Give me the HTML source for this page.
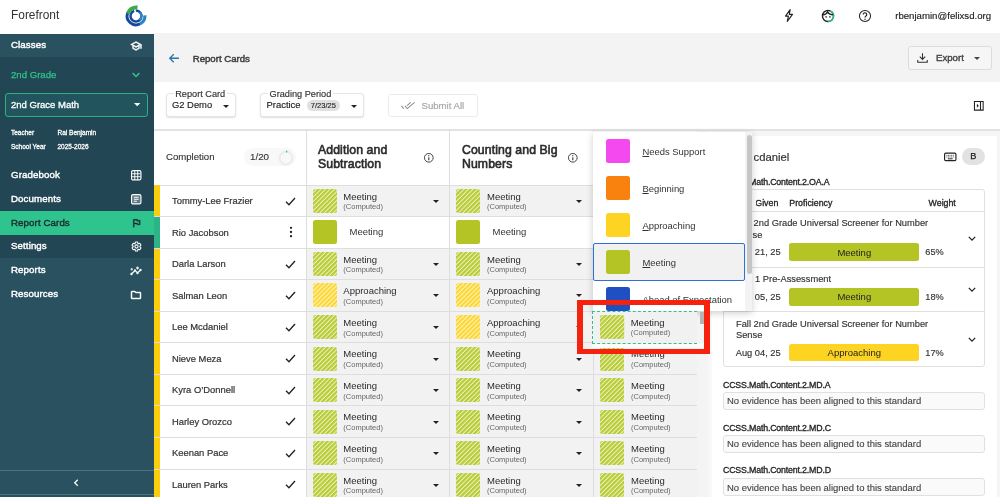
<!DOCTYPE html>
<html lang="en"><head><meta charset="utf-8"><title>Forefront - Report Cards</title>
<style>
html,body{margin:0;padding:0;}
body{width:1000px;height:497px;position:relative;overflow:hidden;background:#fff;font-family:"Liberation Sans", Arial, sans-serif;-webkit-font-smoothing:antialiased;}
#r{position:absolute;left:0;top:0;width:1000px;height:497px;will-change:transform;}
#r>div,#r>svg{position:absolute;}
svg{display:block;overflow:visible;}
</style></head><body><div id="r">
<svg width="0" height="0" style="left:0;top:0"><defs><pattern id="hg" width="3.180" height="40" patternUnits="userSpaceOnUse" patternTransform="rotate(45)"><rect width="3.180" height="40" fill="#edf2c8"/><rect width="2.150" height="40" fill="#b7cc33"/></pattern><pattern id="hy" width="3.180" height="40" patternUnits="userSpaceOnUse" patternTransform="rotate(45)"><rect width="3.180" height="40" fill="#fff4c4"/><rect width="2.150" height="40" fill="#fcd733"/></pattern></defs></svg>
<div style="left:0px;top:0px;width:1000px;height:34px;background:#fff;"></div>
<div style="top:8.46px;font-size:11.9px;line-height:15.47px;color:#333;font-weight:400;white-space:nowrap;left:11px;">Forefront</div>
<svg style="left:124.8px;top:4.8px;" width="22" height="22" viewBox="-11 -11 22 22"><g fill="none"><path d="M-0.19 -5.50A5.5 5.5 0 1 1 -1.88 -5.17" stroke="#17479e" stroke-width="2.4"/><path d="M4.09 -3.68A5.5 5.5 0 0 1 3.68 4.09" stroke="#2a86c2" stroke-width="2.4"/><path d="M4.15 7.81A8.85 8.85 0 0 1 -8.32 -3.03" stroke="#17479e" stroke-width="2.9"/><path d="M-8.18 -2.66A8.6 8.6 0 0 1 1.49 -8.47" stroke="#39ad4a" stroke-width="4.0"/><path d="M8.88 -0.62A8.9 8.9 0 0 1 4.18 7.86" stroke="#2a86c2" stroke-width="3.2"/></g></svg>
<svg style="left:782px;top:8.3px;" width="14" height="15" viewBox="0 0 24 24"><path d="M14 2L6 13h5l-2 9 9-12h-5.5z" fill="none" stroke="#222" stroke-width="1.9" stroke-linejoin="round"/></svg>
<svg style="left:821px;top:9px;" width="14" height="14" viewBox="0 0 24 24"><circle cx="12" cy="12" r="9.5" fill="none" stroke="#222" stroke-width="2.400"/>
<path d="M15.500 3.200A9.500 9.500 0 0 1 21.500 12 9.500 9.500 0 0 1 12 21.500" fill="none" stroke="#2fc48d" stroke-width="2.400"/>
<path d="M3 10c4 0 7-2 8-5 2 3 5 5 10 5" fill="none" stroke="#222" stroke-width="2.200"/>
<circle cx="8.7" cy="13.5" r="1.3" fill="#222"/><circle cx="15.3" cy="13.5" r="1.3" fill="#222"/></svg>
<svg style="left:858px;top:9px;" width="14" height="14" viewBox="0 0 24 24"><circle cx="12" cy="12" r="9.5" fill="none" stroke="#222" stroke-width="1.8"/>
<path d="M9 9.5a3 3 0 1 1 4.6 2.5c-1 .7-1.6 1.2-1.6 2.6" fill="none" stroke="#222" stroke-width="1.9"/><circle cx="12" cy="17.6" r="1.2" fill="#222"/></svg>
<div style="top:9.93px;font-size:9.65px;line-height:12.55px;color:#222;font-weight:400;white-space:nowrap;left:895.2px;-webkit-text-stroke:.15px #222;">rbenjamin@felixsd.org</div>
<div style="left:0px;top:33.5px;width:154px;height:464px;background:#29515f;"></div>
<div style="left:0px;top:57px;width:154px;height:201px;background:#224653;"></div>
<div style="top:39.2px;font-size:9.7px;line-height:12.61px;color:#fff;font-weight:400;white-space:nowrap;left:11px;-webkit-text-stroke:.4px #fff;letter-spacing:.1px;">Classes</div>
<svg style="left:130px;top:39.5px;" width="12" height="12" viewBox="0 0 24 24"><path d="M12 3L1 9l4 2.18v6L12 21l7-3.82v-6l2-1.09V17h2V9L12 3zm6.82 6L12 12.72 5.18 9 12 5.28 18.82 9zM17 15.99l-5 2.73-5-2.73v-3.72L12 15l5-2.73v3.72z" fill="#fff" stroke="#fff" stroke-width=".9"/></svg>
<div style="top:69.06px;font-size:9.6px;line-height:12.48px;color:#2fc48d;font-weight:400;white-space:nowrap;left:11px;-webkit-text-stroke:.25px #2fc48d;">2nd Grade</div>
<svg style="left:131px;top:72px;" width="10" height="6" viewBox="0 0 12 8"><path d="M1.5 1.5L6 6l4.5-4.5" fill="none" stroke="#2fc48d" stroke-width="1.9"/></svg>
<div style="left:4.9px;top:93px;width:143.3px;height:23.6px;box-sizing:border-box;border:1px solid #2bb085;border-radius:3px;background:#22545e;"></div>
<div style="top:99.22px;font-size:9.5px;line-height:12.35px;color:#fff;font-weight:400;white-space:nowrap;left:11px;-webkit-text-stroke:.3px #fff;">2nd Grace Math</div>
<svg style="left:134.1px;top:103.4px;" width="6.4" height="3.2" viewBox="0 0 10 5"><path d="M0 0H10L5 5Z" fill="#fff"/></svg>
<div style="top:128.58px;font-size:6.5px;line-height:8.45px;color:#fff;font-weight:400;white-space:nowrap;left:11px;-webkit-text-stroke:.28px #fff;">Teacher</div>
<div style="top:128.98px;font-size:6.5px;line-height:8.45px;color:#fff;font-weight:400;white-space:nowrap;left:57.5px;-webkit-text-stroke:.28px #fff;">Rai Benjamin</div>
<div style="top:142.78px;font-size:6.5px;line-height:8.45px;color:#fff;font-weight:400;white-space:nowrap;left:11px;-webkit-text-stroke:.28px #fff;">School Year</div>
<div style="top:142.78px;font-size:6.5px;line-height:8.45px;color:#fff;font-weight:400;white-space:nowrap;left:57.5px;-webkit-text-stroke:.28px #fff;">2025-2026</div>
<div style="top:168.69px;font-size:9.7px;line-height:12.61px;color:#fff;font-weight:400;white-space:nowrap;left:11px;-webkit-text-stroke:.4px #fff;letter-spacing:.1px;">Gradebook</div>
<svg style="left:130.8px;top:169.8px;" width="10.5" height="10.5" viewBox="0 0 24 24"><rect x="1.300" y="1.300" width="21.400" height="21.400" rx="3.500" fill="none" stroke="#fff" stroke-width="2.600"/><path d="M8.600 2v20M15.400 2v20M2 8.600h20M2 15.400h20" stroke="#fff" stroke-width="2.200"/></svg>
<div style="top:192.5px;font-size:9.7px;line-height:12.61px;color:#fff;font-weight:400;white-space:nowrap;left:11px;-webkit-text-stroke:.4px #fff;letter-spacing:.1px;">Documents</div>
<svg style="left:130.8px;top:193.7px;" width="10.5" height="10.5" viewBox="0 0 24 24"><rect x="1.300" y="1.300" width="21.400" height="21.400" rx="3.500" fill="#5d7a84" stroke="#fff" stroke-width="2.600"/><path d="M6.500 7.500h11M6.500 12h11M6.500 16.500h7" stroke="#fff" stroke-width="2.400"/></svg>
<div style="left:0px;top:211px;width:154px;height:23.5px;background:#2fc48d;"></div>
<div style="top:216.5px;font-size:9.7px;line-height:12.61px;color:#1c2b30;font-weight:400;white-space:nowrap;left:11px;-webkit-text-stroke:.4px #1c2b30;letter-spacing:.1px;">Report Cards</div>
<svg style="left:131px;top:217px;" width="11" height="12" viewBox="0 0 24 24"><path d="M12.360 6l.4 2H18v6h-3.360l-.4-2H7V6h5.360M14 4H5v17h2v-7h5.600l.4 2h7V6h-5.600L14 4z" fill="#1c2b30" stroke="#1c2b30" stroke-width=".9"/></svg>
<div style="top:240.0px;font-size:9.7px;line-height:12.61px;color:#fff;font-weight:400;white-space:nowrap;left:11px;-webkit-text-stroke:.4px #fff;letter-spacing:.1px;">Settings</div>
<svg style="left:130.5px;top:241px;" width="11" height="11" viewBox="0 0 24 24"><path d="M19.430 12.980c.04-.32.07-.64.07-.98s-.03-.66-.07-.98l2.110-1.650c.19-.15.240-.42.120-.64l-2-3.460c-.12-.22-.39-.3-.61-.22l-2.490 1c-.52-.4-1.080-.73-1.690-.98l-.38-2.650C14.460 2.180 14.250 2 14 2h-4c-.25 0-.46.180-.49.420l-.38 2.650c-.61.250-1.170.59-1.690.98l-2.490-1c-.23-.09-.49 0-.61.220l-2 3.460c-.13.220-.07.490.12.640l2.110 1.650c-.4.320-.7.650-.7.980s.3.660.7.980l-2.110 1.650c-.19.150-.24.420-.12.640l2 3.460c.12.220.39.300.61.220l2.490-1c.52.400 1.080.73 1.690.98l.38 2.650c.3.240.24.420.49.420h4c.25 0 .46-.18.490-.42l.38-2.650c.61-.25 1.170-.59 1.690-.98l2.490 1c.23.090.49 0 .61-.22l2-3.460c.12-.22.070-.49-.12-.64l-2.110-1.650zM12 15.500c-1.930 0-3.500-1.570-3.500-3.500s1.570-3.500 3.500-3.500 3.500 1.570 3.500 3.500-1.570 3.500-3.500 3.500z" fill="none" stroke="#fff" stroke-width="2.300"/></svg>
<div style="top:263.89px;font-size:9.7px;line-height:12.61px;color:#fff;font-weight:400;white-space:nowrap;left:11px;-webkit-text-stroke:.4px #fff;letter-spacing:.1px;">Reports</div>
<svg style="left:130px;top:264.5px;" width="12" height="12" viewBox="0 0 24 24"><path d="M21 8c-1.450 0-2.260 1.440-1.930 2.510l-3.550 3.560c-.3-.09-.74-.09-1.040 0l-2.550-2.550C12.270 10.450 11.460 9 10 9c-1.450 0-2.270 1.440-1.930 2.520l-4.560 4.550C2.440 15.740 1 16.550 1 18c0 1.100.9 2 2 2 1.450 0 2.260-1.440 1.930-2.510l4.550-4.560c.3.090.74.090 1.040 0l2.550 2.550C12.730 16.550 13.540 18 15 18c1.450 0 2.270-1.440 1.930-2.520l3.560-3.550c1.070.33 2.510-.48 2.510-1.930 0-1.100-.9-2-2-2zM15 9l.94-2.070L18 6l-2.060-.93L15 3l-.92 2.070L12 6l2.080.93zM3.500 11L4 9l2-.5L4 8l-.5-2L3 8l-2 .5L3 9z" fill="#fff" stroke="#fff" stroke-width=".9"/></svg>
<div style="top:287.69px;font-size:9.7px;line-height:12.61px;color:#fff;font-weight:400;white-space:nowrap;left:11px;-webkit-text-stroke:.4px #fff;letter-spacing:.1px;">Resources</div>
<svg style="left:130px;top:288.5px;" width="12" height="12" viewBox="0 0 24 24"><path d="M9.170 6l2 2H20v10H4V6h5.170M10 4H4c-1.100 0-1.990.9-1.990 2L2 18c0 1.100.9 2 2 2h16c1.100 0 2-.9 2-2V8c0-1.100-.9-2-2-2h-8l-2-2z" fill="#fff" stroke="#fff" stroke-width=".9"/></svg>
<div style="left:0px;top:469.5px;width:154px;height:0.8px;background:#4f7480;"></div>
<div style="left:0px;top:494.4px;width:154px;height:0.8px;background:#4f7480;"></div>
<svg style="left:73.3px;top:477.8px;" width="6" height="9.5" viewBox="0 0 8 10"><path d="M6.300 1L2.300 5l4 4" fill="none" stroke="#fff" stroke-width="1.700"/></svg>
<div style="left:154px;top:33px;width:846px;height:49px;background:#f3f3f3;"></div>
<svg style="left:167.6px;top:53px;" width="11.5" height="10.5" viewBox="0 0 20 16"><path d="M10 1L3 8l7 7M3.500 8H19" fill="none" stroke="#2576a6" stroke-width="2.300"/></svg>
<div style="top:52.52px;font-size:9.65px;line-height:12.55px;color:#3c3c3c;font-weight:400;white-space:nowrap;left:192.7px;-webkit-text-stroke:.45px #3c3c3c;">Report Cards</div>
<div style="left:908px;top:46px;width:83.5px;height:23.6px;box-sizing:border-box;border:1px solid #dcdcdc;border-radius:3px;background:#f6f6f6;"></div>
<svg style="left:916.3px;top:51.3px;" width="13" height="13.5" viewBox="0 0 24 24"><path d="M12 3.500v11M7 10l5 5 5-5M3.200 16v4.200h17.600V16" fill="none" stroke="#333" stroke-width="2"/></svg>
<div style="top:52.02px;font-size:9.65px;line-height:12.55px;color:#444;font-weight:400;white-space:nowrap;left:936px;-webkit-text-stroke:.4px #444;">Export</div>
<svg style="left:974.0px;top:57.0px;" width="6" height="3" viewBox="0 0 10 5"><path d="M0 0H10L5 5Z" fill="#444"/></svg>
<div style="left:154px;top:82px;width:846px;height:48px;background:#fff;"></div>
<div style="left:166px;top:93.3px;width:70px;height:24px;box-sizing:border-box;border:1px solid #e4e4e4;border-radius:3px;background:#fff;box-shadow:0 1px 1.500px rgba(0,0,0,.12);"></div>
<div style="top:88.62px;font-size:9.2px;line-height:11.96px;color:#333;font-weight:400;white-space:nowrap;left:175.2px;-webkit-text-stroke:.15px #333;background:#fff;padding:0 1.500px;margin-left:-1.500px;">Report Card</div>
<div style="top:99.49px;font-size:9.4px;line-height:12.22px;color:#222;font-weight:400;white-space:nowrap;left:172px;-webkit-text-stroke:.15px #222;">G2 Demo</div>
<svg style="left:223.1px;top:104.5px;" width="6" height="3" viewBox="0 0 10 5"><path d="M0 0H10L5 5Z" fill="#222"/></svg>
<div style="left:260px;top:93.3px;width:104px;height:24px;box-sizing:border-box;border:1px solid #e4e4e4;border-radius:3px;background:#fff;box-shadow:0 1px 1.500px rgba(0,0,0,.12);"></div>
<div style="top:88.62px;font-size:9.2px;line-height:11.96px;color:#333;font-weight:400;white-space:nowrap;left:269.5px;-webkit-text-stroke:.15px #333;background:#fff;padding:0 1.500px;margin-left:-1.500px;">Grading Period</div>
<div style="top:99.45px;font-size:9.45px;line-height:12.29px;color:#222;font-weight:400;white-space:nowrap;left:266.5px;-webkit-text-stroke:.15px #222;">Practice</div>
<div style="left:306.5px;top:99.5px;width:33px;height:11.5px;background:#e0e0e0;border-radius:6px;"></div>
<div style="top:101.12px;font-size:7.5px;line-height:9.75px;color:#222;font-weight:400;white-space:nowrap;left:310.8px;-webkit-text-stroke:.12px #222;">7/23/25</div>
<svg style="left:350.6px;top:104.5px;" width="6" height="3" viewBox="0 0 10 5"><path d="M0 0H10L5 5Z" fill="#222"/></svg>
<div style="left:388.1px;top:93.8px;width:89.5px;height:23.4px;box-sizing:border-box;border:1px solid #ebebeb;border-radius:3px;background:#fff;"></div>
<svg style="left:400.8px;top:102.3px;" width="14" height="7" viewBox="0 0 18 9"><path d="M0.500 5l3 3.500M5 5l3 3.500 9.500-8M12.500 0.500L7.800 4.800" fill="none" stroke="#8c8c8c" stroke-width="1.300"/></svg>
<div style="top:100.16px;font-size:9.6px;line-height:12.48px;color:#a8a8a8;font-weight:400;white-space:nowrap;left:421.5px;-webkit-text-stroke:.2px #a8a8a8;">Submit All</div>
<svg style="left:973.4px;top:99.9px;" width="11.6" height="11.6" viewBox="0 0 24 24"><path d="M3 3h18v18H3zM15.500 3v18" fill="none" stroke="#222" stroke-width="2.200"/><path d="M8 8l4 4-4 4z" fill="#222"/></svg>
<div style="left:154px;top:130px;width:846px;height:367px;background:#fff;"></div>
<div style="left:154px;top:129.2px;width:846px;height:1.4px;background:#e2e2e2;"></div>
<div style="top:150.96px;font-size:9.6px;line-height:12.48px;color:#333;font-weight:400;white-space:nowrap;left:166px;-webkit-text-stroke:.12px #333;">Completion</div>
<div style="left:243.5px;top:148.3px;width:52.8px;height:18px;background:#f8f8f8;border-radius:9px;"></div>
<div style="top:150.83px;font-size:9.8px;line-height:12.74px;color:#333;font-weight:400;white-space:nowrap;left:250px;-webkit-text-stroke:.12px #333;">1/20</div>
<svg style="left:277.5px;top:149.5px;" width="16" height="16" viewBox="0 0 24 24"><circle cx="12" cy="12" r="9.600" fill="none" stroke="#ececec" stroke-width="3"/><path d="M12 2.400A9.600 9.600 0 0 1 13.800 2.570" fill="none" stroke="#2fc48d" stroke-width="2.600"/></svg>
<div style="top:143.03px;font-size:12.25px;line-height:15.93px;color:#2b2b2b;font-weight:400;white-space:nowrap;left:318px;-webkit-text-stroke:.6px #2b2b2b;letter-spacing:.1px;">Addition and</div>
<div style="top:156.84px;font-size:12.25px;line-height:15.93px;color:#2b2b2b;font-weight:400;white-space:nowrap;left:318px;-webkit-text-stroke:.6px #2b2b2b;letter-spacing:.1px;">Subtraction</div>
<svg style="left:422.7px;top:151.9px;" width="11.6" height="11.6" viewBox="0 0 24 24"><circle cx="12" cy="12" r="9" fill="none" stroke="#333" stroke-width="1.900"/><path d="M12 11v6" stroke="#333" stroke-width="2.200"/><circle cx="12" cy="7.600" r="1.300" fill="#333"/></svg>
<div style="top:143.03px;font-size:12.25px;line-height:15.93px;color:#2b2b2b;font-weight:400;white-space:nowrap;left:462px;-webkit-text-stroke:.6px #2b2b2b;letter-spacing:.1px;">Counting and Big</div>
<div style="top:156.84px;font-size:12.25px;line-height:15.93px;color:#2b2b2b;font-weight:400;white-space:nowrap;left:462px;-webkit-text-stroke:.6px #2b2b2b;letter-spacing:.1px;">Numbers</div>
<svg style="left:567.2px;top:151.9px;" width="11.6" height="11.6" viewBox="0 0 24 24"><circle cx="12" cy="12" r="9" fill="none" stroke="#333" stroke-width="1.900"/><path d="M12 11v6" stroke="#333" stroke-width="2.200"/><circle cx="12" cy="7.600" r="1.300" fill="#333"/></svg>
<div style="left:154px;top:184.6px;width:543px;height:1px;background:#dedede;"></div>
<div style="left:154px;top:185.0px;width:6px;height:31.55px;background:#fccd0c;"></div>
<div style="top:195.09px;font-size:9.4px;line-height:12.22px;color:#333;font-weight:400;white-space:nowrap;left:172px;-webkit-text-stroke:.2px #333;">Tommy-Lee Frazier</div>
<svg style="left:285px;top:196.5px;" width="11" height="9" viewBox="0 0 12 10"><path d="M1 5.200L4.300 8.500 11 1.200" fill="none" stroke="#222" stroke-width="1.500"/></svg>
<div style="left:306.5px;top:185.5px;width:142.5px;height:31.05px;background:#f2f2f2;"></div>
<svg style="left:313px;top:188.8px" width="24" height="24"><rect width="24" height="24" rx="2.500" fill="url(#hg)"/></svg>
<div style="top:190.62px;font-size:9.5px;line-height:12.35px;color:#2a2a2a;font-weight:400;white-space:nowrap;left:343.3px;">Meeting</div>
<div style="top:202.33px;font-size:7.5px;line-height:9.75px;color:#666;font-weight:400;white-space:nowrap;left:343.3px;">(Computed)</div>
<svg style="left:433.0px;top:199.8px;" width="6" height="3" viewBox="0 0 10 5"><path d="M0 0H10L5 5Z" fill="#222"/></svg>
<div style="left:449.5px;top:185.5px;width:143.5px;height:31.05px;background:#f2f2f2;"></div>
<svg style="left:456px;top:188.8px" width="24" height="24"><rect width="24" height="24" rx="2.500" fill="url(#hg)"/></svg>
<div style="top:190.62px;font-size:9.5px;line-height:12.35px;color:#2a2a2a;font-weight:400;white-space:nowrap;left:487px;">Meeting</div>
<div style="top:202.33px;font-size:7.5px;line-height:9.75px;color:#666;font-weight:400;white-space:nowrap;left:487px;">(Computed)</div>
<svg style="left:576.4px;top:199.8px;" width="6" height="3" viewBox="0 0 10 5"><path d="M0 0H10L5 5Z" fill="#222"/></svg>
<div style="left:593.5px;top:185.5px;width:103.0px;height:31.05px;background:#f2f2f2;"></div>
<svg style="left:600px;top:188.8px" width="24" height="24"><rect width="24" height="24" rx="2.500" fill="url(#hg)"/></svg>
<div style="top:190.62px;font-size:9.5px;line-height:12.35px;color:#2a2a2a;font-weight:400;white-space:nowrap;left:631px;">Meeting</div>
<div style="top:202.33px;font-size:7.5px;line-height:9.75px;color:#666;font-weight:400;white-space:nowrap;left:631px;">(Computed)</div>
<div style="left:154px;top:216.55px;width:6px;height:31.55px;background:#2cb486;"></div>
<div style="top:226.64px;font-size:9.4px;line-height:12.22px;color:#333;font-weight:400;white-space:nowrap;left:172px;-webkit-text-stroke:.2px #333;">Rio Jacobson</div>
<svg style="left:287.5px;top:226.35000000000002px;" width="6" height="12" viewBox="0 0 6 13"><circle cx="3" cy="2" r="1.250" fill="#222"/><circle cx="3" cy="6.500" r="1.250" fill="#222"/><circle cx="3" cy="11" r="1.250" fill="#222"/></svg>
<div style="left:313px;top:220.35px;width:24px;height:24px;background:#b4c424;border-radius:2.500px;"></div>
<div style="top:226.38px;font-size:9.5px;line-height:12.35px;color:#333;font-weight:400;white-space:nowrap;left:349.5px;">Meeting</div>
<div style="left:456px;top:220.35px;width:24px;height:24px;background:#b4c424;border-radius:2.500px;"></div>
<div style="top:226.38px;font-size:9.5px;line-height:12.35px;color:#333;font-weight:400;white-space:nowrap;left:492.5px;">Meeting</div>
<div style="left:600px;top:220.35px;width:24px;height:24px;background:#b4c424;border-radius:2.500px;"></div>
<div style="top:226.38px;font-size:9.5px;line-height:12.35px;color:#333;font-weight:400;white-space:nowrap;left:636.5px;">Meeting</div>
<div style="left:154px;top:248.1px;width:6px;height:31.55px;background:#fccd0c;"></div>
<div style="top:258.19px;font-size:9.4px;line-height:12.22px;color:#333;font-weight:400;white-space:nowrap;left:172px;-webkit-text-stroke:.2px #333;">Darla Larson</div>
<svg style="left:285px;top:259.6px;" width="11" height="9" viewBox="0 0 12 10"><path d="M1 5.200L4.300 8.500 11 1.200" fill="none" stroke="#222" stroke-width="1.500"/></svg>
<div style="left:306.5px;top:248.6px;width:142.5px;height:31.05px;background:#f2f2f2;"></div>
<svg style="left:313px;top:251.9px" width="24" height="24"><rect width="24" height="24" rx="2.500" fill="url(#hg)"/></svg>
<div style="top:253.73px;font-size:9.5px;line-height:12.35px;color:#2a2a2a;font-weight:400;white-space:nowrap;left:343.3px;">Meeting</div>
<div style="top:265.43px;font-size:7.5px;line-height:9.75px;color:#666;font-weight:400;white-space:nowrap;left:343.3px;">(Computed)</div>
<svg style="left:433.0px;top:262.9px;" width="6" height="3" viewBox="0 0 10 5"><path d="M0 0H10L5 5Z" fill="#222"/></svg>
<div style="left:449.5px;top:248.6px;width:143.5px;height:31.05px;background:#f2f2f2;"></div>
<svg style="left:456px;top:251.9px" width="24" height="24"><rect width="24" height="24" rx="2.500" fill="url(#hg)"/></svg>
<div style="top:253.73px;font-size:9.5px;line-height:12.35px;color:#2a2a2a;font-weight:400;white-space:nowrap;left:487px;">Meeting</div>
<div style="top:265.43px;font-size:7.5px;line-height:9.75px;color:#666;font-weight:400;white-space:nowrap;left:487px;">(Computed)</div>
<svg style="left:576.4px;top:262.9px;" width="6" height="3" viewBox="0 0 10 5"><path d="M0 0H10L5 5Z" fill="#222"/></svg>
<div style="left:593.5px;top:248.6px;width:103.0px;height:31.05px;background:#f2f2f2;"></div>
<svg style="left:600px;top:251.9px" width="24" height="24"><rect width="24" height="24" rx="2.500" fill="url(#hg)"/></svg>
<div style="top:253.73px;font-size:9.5px;line-height:12.35px;color:#2a2a2a;font-weight:400;white-space:nowrap;left:631px;">Meeting</div>
<div style="top:265.43px;font-size:7.5px;line-height:9.75px;color:#666;font-weight:400;white-space:nowrap;left:631px;">(Computed)</div>
<div style="left:154px;top:279.65px;width:6px;height:31.55px;background:#fccd0c;"></div>
<div style="top:289.74px;font-size:9.4px;line-height:12.22px;color:#333;font-weight:400;white-space:nowrap;left:172px;-webkit-text-stroke:.2px #333;">Salman Leon</div>
<svg style="left:285px;top:291.15px;" width="11" height="9" viewBox="0 0 12 10"><path d="M1 5.200L4.300 8.500 11 1.200" fill="none" stroke="#222" stroke-width="1.500"/></svg>
<div style="left:306.5px;top:280.15px;width:142.5px;height:31.05px;background:#f2f2f2;"></div>
<svg style="left:313px;top:283.45px" width="24" height="24"><rect width="24" height="24" rx="2.500" fill="url(#hy)"/></svg>
<div style="top:285.27px;font-size:9.5px;line-height:12.35px;color:#2a2a2a;font-weight:400;white-space:nowrap;left:343.3px;">Approaching</div>
<div style="top:296.97px;font-size:7.5px;line-height:9.75px;color:#666;font-weight:400;white-space:nowrap;left:343.3px;">(Computed)</div>
<svg style="left:433.0px;top:294.45px;" width="6" height="3" viewBox="0 0 10 5"><path d="M0 0H10L5 5Z" fill="#222"/></svg>
<div style="left:449.5px;top:280.15px;width:143.5px;height:31.05px;background:#f2f2f2;"></div>
<svg style="left:456px;top:283.45px" width="24" height="24"><rect width="24" height="24" rx="2.500" fill="url(#hy)"/></svg>
<div style="top:285.27px;font-size:9.5px;line-height:12.35px;color:#2a2a2a;font-weight:400;white-space:nowrap;left:487px;">Approaching</div>
<div style="top:296.97px;font-size:7.5px;line-height:9.75px;color:#666;font-weight:400;white-space:nowrap;left:487px;">(Computed)</div>
<svg style="left:576.4px;top:294.45px;" width="6" height="3" viewBox="0 0 10 5"><path d="M0 0H10L5 5Z" fill="#222"/></svg>
<div style="left:593.5px;top:280.15px;width:103.0px;height:31.05px;background:#f2f2f2;"></div>
<svg style="left:600px;top:283.45px" width="24" height="24"><rect width="24" height="24" rx="2.500" fill="url(#hy)"/></svg>
<div style="top:285.27px;font-size:9.5px;line-height:12.35px;color:#2a2a2a;font-weight:400;white-space:nowrap;left:631px;">Approaching</div>
<div style="top:296.97px;font-size:7.5px;line-height:9.75px;color:#666;font-weight:400;white-space:nowrap;left:631px;">(Computed)</div>
<div style="left:154px;top:311.2px;width:6px;height:31.55px;background:#fccd0c;"></div>
<div style="top:321.29px;font-size:9.4px;line-height:12.22px;color:#333;font-weight:400;white-space:nowrap;left:172px;-webkit-text-stroke:.2px #333;">Lee Mcdaniel</div>
<svg style="left:285px;top:322.7px;" width="11" height="9" viewBox="0 0 12 10"><path d="M1 5.200L4.300 8.500 11 1.200" fill="none" stroke="#222" stroke-width="1.500"/></svg>
<div style="left:306.5px;top:311.7px;width:142.5px;height:31.05px;background:#f2f2f2;"></div>
<svg style="left:313px;top:315.0px" width="24" height="24"><rect width="24" height="24" rx="2.500" fill="url(#hg)"/></svg>
<div style="top:316.82px;font-size:9.5px;line-height:12.35px;color:#2a2a2a;font-weight:400;white-space:nowrap;left:343.3px;">Meeting</div>
<div style="top:328.52px;font-size:7.5px;line-height:9.75px;color:#666;font-weight:400;white-space:nowrap;left:343.3px;">(Computed)</div>
<svg style="left:433.0px;top:326.0px;" width="6" height="3" viewBox="0 0 10 5"><path d="M0 0H10L5 5Z" fill="#222"/></svg>
<div style="left:449.5px;top:311.7px;width:143.5px;height:31.05px;background:#f2f2f2;"></div>
<svg style="left:456px;top:315.0px" width="24" height="24"><rect width="24" height="24" rx="2.500" fill="url(#hy)"/></svg>
<div style="top:316.82px;font-size:9.5px;line-height:12.35px;color:#2a2a2a;font-weight:400;white-space:nowrap;left:487px;">Approaching</div>
<div style="top:328.52px;font-size:7.5px;line-height:9.75px;color:#666;font-weight:400;white-space:nowrap;left:487px;">(Computed)</div>
<svg style="left:576.4px;top:326.0px;" width="6" height="3" viewBox="0 0 10 5"><path d="M0 0H10L5 5Z" fill="#222"/></svg>
<div style="left:593.5px;top:311.7px;width:103.0px;height:31.05px;background:#f2f2f2;"></div>
<svg style="left:600px;top:315.0px" width="24" height="24"><rect width="24" height="24" rx="2.500" fill="url(#hg)"/></svg>
<div style="top:316.82px;font-size:9.5px;line-height:12.35px;color:#2a2a2a;font-weight:400;white-space:nowrap;left:631px;">Meeting</div>
<div style="top:328.52px;font-size:7.5px;line-height:9.75px;color:#666;font-weight:400;white-space:nowrap;left:631px;">(Computed)</div>
<div style="left:154px;top:342.75px;width:6px;height:31.55px;background:#fccd0c;"></div>
<div style="top:352.84px;font-size:9.4px;line-height:12.22px;color:#333;font-weight:400;white-space:nowrap;left:172px;-webkit-text-stroke:.2px #333;">Nieve Meza</div>
<svg style="left:285px;top:354.25px;" width="11" height="9" viewBox="0 0 12 10"><path d="M1 5.200L4.300 8.500 11 1.200" fill="none" stroke="#222" stroke-width="1.500"/></svg>
<div style="left:306.5px;top:343.25px;width:142.5px;height:31.05px;background:#f2f2f2;"></div>
<svg style="left:313px;top:346.55px" width="24" height="24"><rect width="24" height="24" rx="2.500" fill="url(#hg)"/></svg>
<div style="top:348.38px;font-size:9.5px;line-height:12.35px;color:#2a2a2a;font-weight:400;white-space:nowrap;left:343.3px;">Meeting</div>
<div style="top:360.07px;font-size:7.5px;line-height:9.75px;color:#666;font-weight:400;white-space:nowrap;left:343.3px;">(Computed)</div>
<svg style="left:433.0px;top:357.55px;" width="6" height="3" viewBox="0 0 10 5"><path d="M0 0H10L5 5Z" fill="#222"/></svg>
<div style="left:449.5px;top:343.25px;width:143.5px;height:31.05px;background:#f2f2f2;"></div>
<svg style="left:456px;top:346.55px" width="24" height="24"><rect width="24" height="24" rx="2.500" fill="url(#hg)"/></svg>
<div style="top:348.38px;font-size:9.5px;line-height:12.35px;color:#2a2a2a;font-weight:400;white-space:nowrap;left:487px;">Meeting</div>
<div style="top:360.07px;font-size:7.5px;line-height:9.75px;color:#666;font-weight:400;white-space:nowrap;left:487px;">(Computed)</div>
<svg style="left:576.4px;top:357.55px;" width="6" height="3" viewBox="0 0 10 5"><path d="M0 0H10L5 5Z" fill="#222"/></svg>
<div style="left:593.5px;top:343.25px;width:103.0px;height:31.05px;background:#f2f2f2;"></div>
<svg style="left:600px;top:346.55px" width="24" height="24"><rect width="24" height="24" rx="2.500" fill="url(#hg)"/></svg>
<div style="top:348.38px;font-size:9.5px;line-height:12.35px;color:#2a2a2a;font-weight:400;white-space:nowrap;left:631px;">Meeting</div>
<div style="top:360.07px;font-size:7.5px;line-height:9.75px;color:#666;font-weight:400;white-space:nowrap;left:631px;">(Computed)</div>
<div style="left:154px;top:374.3px;width:6px;height:31.55px;background:#fccd0c;"></div>
<div style="top:384.39px;font-size:9.4px;line-height:12.22px;color:#333;font-weight:400;white-space:nowrap;left:172px;-webkit-text-stroke:.2px #333;">Kyra O’Donnell</div>
<svg style="left:285px;top:385.8px;" width="11" height="9" viewBox="0 0 12 10"><path d="M1 5.200L4.300 8.500 11 1.200" fill="none" stroke="#222" stroke-width="1.500"/></svg>
<div style="left:306.5px;top:374.8px;width:142.5px;height:31.05px;background:#f2f2f2;"></div>
<svg style="left:313px;top:378.1px" width="24" height="24"><rect width="24" height="24" rx="2.500" fill="url(#hg)"/></svg>
<div style="top:379.93px;font-size:9.5px;line-height:12.35px;color:#2a2a2a;font-weight:400;white-space:nowrap;left:343.3px;">Meeting</div>
<div style="top:391.62px;font-size:7.5px;line-height:9.75px;color:#666;font-weight:400;white-space:nowrap;left:343.3px;">(Computed)</div>
<svg style="left:433.0px;top:389.1px;" width="6" height="3" viewBox="0 0 10 5"><path d="M0 0H10L5 5Z" fill="#222"/></svg>
<div style="left:449.5px;top:374.8px;width:143.5px;height:31.05px;background:#f2f2f2;"></div>
<svg style="left:456px;top:378.1px" width="24" height="24"><rect width="24" height="24" rx="2.500" fill="url(#hg)"/></svg>
<div style="top:379.93px;font-size:9.5px;line-height:12.35px;color:#2a2a2a;font-weight:400;white-space:nowrap;left:487px;">Meeting</div>
<div style="top:391.62px;font-size:7.5px;line-height:9.75px;color:#666;font-weight:400;white-space:nowrap;left:487px;">(Computed)</div>
<svg style="left:576.4px;top:389.1px;" width="6" height="3" viewBox="0 0 10 5"><path d="M0 0H10L5 5Z" fill="#222"/></svg>
<div style="left:593.5px;top:374.8px;width:103.0px;height:31.05px;background:#f2f2f2;"></div>
<svg style="left:600px;top:378.1px" width="24" height="24"><rect width="24" height="24" rx="2.500" fill="url(#hg)"/></svg>
<div style="top:379.93px;font-size:9.5px;line-height:12.35px;color:#2a2a2a;font-weight:400;white-space:nowrap;left:631px;">Meeting</div>
<div style="top:391.62px;font-size:7.5px;line-height:9.75px;color:#666;font-weight:400;white-space:nowrap;left:631px;">(Computed)</div>
<div style="left:154px;top:405.85px;width:6px;height:31.55px;background:#fccd0c;"></div>
<div style="top:415.94px;font-size:9.4px;line-height:12.22px;color:#333;font-weight:400;white-space:nowrap;left:172px;-webkit-text-stroke:.2px #333;">Harley Orozco</div>
<svg style="left:285px;top:417.35px;" width="11" height="9" viewBox="0 0 12 10"><path d="M1 5.200L4.300 8.500 11 1.200" fill="none" stroke="#222" stroke-width="1.500"/></svg>
<div style="left:306.5px;top:406.35px;width:142.5px;height:31.05px;background:#f2f2f2;"></div>
<svg style="left:313px;top:409.65px" width="24" height="24"><rect width="24" height="24" rx="2.500" fill="url(#hg)"/></svg>
<div style="top:411.48px;font-size:9.5px;line-height:12.35px;color:#2a2a2a;font-weight:400;white-space:nowrap;left:343.3px;">Meeting</div>
<div style="top:423.18px;font-size:7.5px;line-height:9.75px;color:#666;font-weight:400;white-space:nowrap;left:343.3px;">(Computed)</div>
<svg style="left:433.0px;top:420.65px;" width="6" height="3" viewBox="0 0 10 5"><path d="M0 0H10L5 5Z" fill="#222"/></svg>
<div style="left:449.5px;top:406.35px;width:143.5px;height:31.05px;background:#f2f2f2;"></div>
<svg style="left:456px;top:409.65px" width="24" height="24"><rect width="24" height="24" rx="2.500" fill="url(#hg)"/></svg>
<div style="top:411.48px;font-size:9.5px;line-height:12.35px;color:#2a2a2a;font-weight:400;white-space:nowrap;left:487px;">Meeting</div>
<div style="top:423.18px;font-size:7.5px;line-height:9.75px;color:#666;font-weight:400;white-space:nowrap;left:487px;">(Computed)</div>
<svg style="left:576.4px;top:420.65px;" width="6" height="3" viewBox="0 0 10 5"><path d="M0 0H10L5 5Z" fill="#222"/></svg>
<div style="left:593.5px;top:406.35px;width:103.0px;height:31.05px;background:#f2f2f2;"></div>
<svg style="left:600px;top:409.65px" width="24" height="24"><rect width="24" height="24" rx="2.500" fill="url(#hg)"/></svg>
<div style="top:411.48px;font-size:9.5px;line-height:12.35px;color:#2a2a2a;font-weight:400;white-space:nowrap;left:631px;">Meeting</div>
<div style="top:423.18px;font-size:7.5px;line-height:9.75px;color:#666;font-weight:400;white-space:nowrap;left:631px;">(Computed)</div>
<div style="left:154px;top:437.4px;width:6px;height:31.55px;background:#fccd0c;"></div>
<div style="top:447.49px;font-size:9.4px;line-height:12.22px;color:#333;font-weight:400;white-space:nowrap;left:172px;-webkit-text-stroke:.2px #333;">Keenan Pace</div>
<svg style="left:285px;top:448.9px;" width="11" height="9" viewBox="0 0 12 10"><path d="M1 5.200L4.300 8.500 11 1.200" fill="none" stroke="#222" stroke-width="1.500"/></svg>
<div style="left:306.5px;top:437.9px;width:142.5px;height:31.05px;background:#f2f2f2;"></div>
<svg style="left:313px;top:441.2px" width="24" height="24"><rect width="24" height="24" rx="2.500" fill="url(#hg)"/></svg>
<div style="top:443.02px;font-size:9.5px;line-height:12.35px;color:#2a2a2a;font-weight:400;white-space:nowrap;left:343.3px;">Meeting</div>
<div style="top:454.72px;font-size:7.5px;line-height:9.75px;color:#666;font-weight:400;white-space:nowrap;left:343.3px;">(Computed)</div>
<svg style="left:433.0px;top:452.2px;" width="6" height="3" viewBox="0 0 10 5"><path d="M0 0H10L5 5Z" fill="#222"/></svg>
<div style="left:449.5px;top:437.9px;width:143.5px;height:31.05px;background:#f2f2f2;"></div>
<svg style="left:456px;top:441.2px" width="24" height="24"><rect width="24" height="24" rx="2.500" fill="url(#hg)"/></svg>
<div style="top:443.02px;font-size:9.5px;line-height:12.35px;color:#2a2a2a;font-weight:400;white-space:nowrap;left:487px;">Meeting</div>
<div style="top:454.72px;font-size:7.5px;line-height:9.75px;color:#666;font-weight:400;white-space:nowrap;left:487px;">(Computed)</div>
<svg style="left:576.4px;top:452.2px;" width="6" height="3" viewBox="0 0 10 5"><path d="M0 0H10L5 5Z" fill="#222"/></svg>
<div style="left:593.5px;top:437.9px;width:103.0px;height:31.05px;background:#f2f2f2;"></div>
<svg style="left:600px;top:441.2px" width="24" height="24"><rect width="24" height="24" rx="2.500" fill="url(#hg)"/></svg>
<div style="top:443.02px;font-size:9.5px;line-height:12.35px;color:#2a2a2a;font-weight:400;white-space:nowrap;left:631px;">Meeting</div>
<div style="top:454.72px;font-size:7.5px;line-height:9.75px;color:#666;font-weight:400;white-space:nowrap;left:631px;">(Computed)</div>
<div style="left:154px;top:468.95px;width:6px;height:31.55px;background:#fccd0c;"></div>
<div style="top:479.04px;font-size:9.4px;line-height:12.22px;color:#333;font-weight:400;white-space:nowrap;left:172px;-webkit-text-stroke:.2px #333;">Lauren Parks</div>
<svg style="left:285px;top:480.45px;" width="11" height="9" viewBox="0 0 12 10"><path d="M1 5.200L4.300 8.500 11 1.200" fill="none" stroke="#222" stroke-width="1.500"/></svg>
<div style="left:306.5px;top:469.45px;width:142.5px;height:31.05px;background:#f2f2f2;"></div>
<svg style="left:313px;top:472.75px" width="24" height="24"><rect width="24" height="24" rx="2.500" fill="url(#hg)"/></svg>
<div style="top:474.57px;font-size:9.5px;line-height:12.35px;color:#2a2a2a;font-weight:400;white-space:nowrap;left:343.3px;">Meeting</div>
<div style="top:486.27px;font-size:7.5px;line-height:9.75px;color:#666;font-weight:400;white-space:nowrap;left:343.3px;">(Computed)</div>
<svg style="left:433.0px;top:483.75px;" width="6" height="3" viewBox="0 0 10 5"><path d="M0 0H10L5 5Z" fill="#222"/></svg>
<div style="left:449.5px;top:469.45px;width:143.5px;height:31.05px;background:#f2f2f2;"></div>
<svg style="left:456px;top:472.75px" width="24" height="24"><rect width="24" height="24" rx="2.500" fill="url(#hg)"/></svg>
<div style="top:474.57px;font-size:9.5px;line-height:12.35px;color:#2a2a2a;font-weight:400;white-space:nowrap;left:487px;">Meeting</div>
<div style="top:486.27px;font-size:7.5px;line-height:9.75px;color:#666;font-weight:400;white-space:nowrap;left:487px;">(Computed)</div>
<svg style="left:576.4px;top:483.75px;" width="6" height="3" viewBox="0 0 10 5"><path d="M0 0H10L5 5Z" fill="#222"/></svg>
<div style="left:593.5px;top:469.45px;width:103.0px;height:31.05px;background:#f2f2f2;"></div>
<svg style="left:600px;top:472.75px" width="24" height="24"><rect width="24" height="24" rx="2.500" fill="url(#hg)"/></svg>
<div style="top:474.57px;font-size:9.5px;line-height:12.35px;color:#2a2a2a;font-weight:400;white-space:nowrap;left:631px;">Meeting</div>
<div style="top:486.27px;font-size:7.5px;line-height:9.75px;color:#666;font-weight:400;white-space:nowrap;left:631px;">(Computed)</div>
<div style="left:154px;top:216.15px;width:543px;height:1px;background:#dedede;"></div>
<div style="left:154px;top:247.7px;width:543px;height:1px;background:#dedede;"></div>
<div style="left:154px;top:279.25px;width:543px;height:1px;background:#dedede;"></div>
<div style="left:154px;top:310.8px;width:543px;height:1px;background:#dedede;"></div>
<div style="left:154px;top:342.35px;width:543px;height:1px;background:#dedede;"></div>
<div style="left:154px;top:373.9px;width:543px;height:1px;background:#dedede;"></div>
<div style="left:154px;top:405.45px;width:543px;height:1px;background:#dedede;"></div>
<div style="left:154px;top:437.0px;width:543px;height:1px;background:#dedede;"></div>
<div style="left:154px;top:468.55px;width:543px;height:1px;background:#dedede;"></div>
<div style="left:154px;top:500.1px;width:543px;height:1px;background:#dedede;"></div>
<div style="left:305.6px;top:130px;width:1px;height:367px;background:#dedede;"></div>
<div style="left:448.6px;top:130px;width:1px;height:367px;background:#dedede;"></div>
<div style="left:592.6px;top:130px;width:1px;height:367px;background:#dedede;"></div>
<div style="left:696.5px;top:130.5px;width:9px;height:367px;background:#f4f4f4;"></div>
<div style="left:705px;top:130.5px;width:295px;height:367px;background:#f5f5f5;"></div>
<div style="left:705px;top:130.5px;width:7px;height:367px;background:linear-gradient(90deg,#f2f2f2,#fafafa);"></div>
<div style="left:712px;top:135.7px;width:284.6px;height:362px;background:#fff;"></div>
<div style="top:149.66px;font-size:11.3px;line-height:14.69px;color:#333;font-weight:400;white-space:nowrap;left:722.2px;-webkit-text-stroke:.2px #333;">Lee Mcdaniel</div>
<div style="left:745px;top:148px;width:8.7px;height:18px;background:#fff;"></div>
<svg style="left:944.3px;top:151.8px;" width="12.5" height="9.8" viewBox="0 0 26 18"><rect x="1.200" y="1.200" width="23.600" height="15.600" rx="2.500" fill="none" stroke="#222" stroke-width="2.400"/><path d="M5 5.800h16M5 9.200h16" stroke="#333" stroke-width="1.700" stroke-dasharray="2 1.300"/><path d="M8 13h10" stroke="#222" stroke-width="2"/></svg>
<div style="left:961.7px;top:148.2px;width:23.3px;height:17.2px;background:#e2e2e2;border-radius:9px;"></div>
<div style="top:151.42px;font-size:9.2px;line-height:11.96px;color:#222;font-weight:400;white-space:nowrap;left:873.3px;width:200px;text-align:center;-webkit-text-stroke:.25px #222;">B</div>
<div style="top:176.98px;font-size:8.8px;line-height:11.44px;color:#222;font-weight:400;white-space:nowrap;left:723px;-webkit-text-stroke:.3px #222;letter-spacing:-.17px;">CCSS.Math.Content.2.OA.A</div>
<div style="left:723px;top:189.3px;width:262.4px;height:178.2px;box-sizing:border-box;border:1px solid #e0e0e0;border-radius:3px;background:#fff;"></div>
<div style="top:198.48px;font-size:8.8px;line-height:11.44px;color:#222;font-weight:400;white-space:nowrap;right:221.70000000000005px;-webkit-text-stroke:.3px #222;">Date Given</div>
<div style="top:198.48px;font-size:8.8px;line-height:11.44px;color:#222;font-weight:400;white-space:nowrap;left:789.3px;-webkit-text-stroke:.3px #222;">Proficiency</div>
<div style="top:198.48px;font-size:8.8px;line-height:11.44px;color:#222;font-weight:400;white-space:nowrap;left:928.6px;-webkit-text-stroke:.3px #222;">Weight</div>
<div style="left:723.5px;top:211.2px;width:261px;height:1px;background:#e0e0e0;"></div>
<div style="top:217.46px;font-size:9.3px;line-height:12.09px;color:#333;font-weight:400;white-space:nowrap;left:736px;-webkit-text-stroke:.15px #333;">Fall 2nd Grade Universal Screener for Number</div>
<div style="top:229.06px;font-size:9.3px;line-height:12.09px;color:#333;font-weight:400;white-space:nowrap;left:736px;-webkit-text-stroke:.15px #333;">Sense</div>
<div style="top:246.16px;font-size:9.3px;line-height:12.09px;color:#333;font-weight:400;white-space:nowrap;right:219.29999999999995px;-webkit-text-stroke:.15px #333;">Jul 21, 25</div>
<div style="left:789px;top:243.2px;width:130px;height:17.5px;background:#b4c424;border-radius:2.500px;"></div>
<div style="top:246.52px;font-size:9.5px;line-height:12.35px;color:#222;font-weight:400;white-space:nowrap;left:754.3px;width:200px;text-align:center;">Meeting</div>
<div style="top:247.02px;font-size:9.2px;line-height:11.96px;color:#333;font-weight:400;white-space:nowrap;left:925.3px;-webkit-text-stroke:.15px #333;">65%</div>
<svg style="left:967.5px;top:236.3px;" width="8" height="5" viewBox="0 0 10 6"><path d="M1 1l4 4 4-4" fill="none" stroke="#222" stroke-width="1.600"/></svg>
<div style="left:723.5px;top:267.3px;width:261px;height:1px;background:#e0e0e0;"></div>
<div style="top:273.35px;font-size:9.3px;line-height:12.09px;color:#333;font-weight:400;white-space:nowrap;left:736px;-webkit-text-stroke:.15px #333;">Unit 1 Pre-Assessment</div>
<div style="top:290.95px;font-size:9.3px;line-height:12.09px;color:#333;font-weight:400;white-space:nowrap;right:219.29999999999995px;-webkit-text-stroke:.15px #333;">Aug 05, 25</div>
<div style="left:789px;top:288px;width:130px;height:17.5px;background:#b4c424;border-radius:2.500px;"></div>
<div style="top:291.32px;font-size:9.5px;line-height:12.35px;color:#222;font-weight:400;white-space:nowrap;left:754.3px;width:200px;text-align:center;">Meeting</div>
<div style="top:291.82px;font-size:9.2px;line-height:11.96px;color:#333;font-weight:400;white-space:nowrap;left:925.3px;-webkit-text-stroke:.15px #333;">18%</div>
<svg style="left:967.5px;top:287.0px;" width="8" height="5" viewBox="0 0 10 6"><path d="M1 1l4 4 4-4" fill="none" stroke="#222" stroke-width="1.600"/></svg>
<div style="left:723.5px;top:311.2px;width:261px;height:1px;background:#e0e0e0;"></div>
<div style="top:317.85px;font-size:9.3px;line-height:12.09px;color:#333;font-weight:400;white-space:nowrap;left:736px;-webkit-text-stroke:.15px #333;">Fall 2nd Grade Universal Screener for Number</div>
<div style="top:329.45px;font-size:9.3px;line-height:12.09px;color:#333;font-weight:400;white-space:nowrap;left:736px;-webkit-text-stroke:.15px #333;">Sense</div>
<div style="top:346.75px;font-size:9.3px;line-height:12.09px;color:#333;font-weight:400;white-space:nowrap;right:219.29999999999995px;-webkit-text-stroke:.15px #333;">Aug 04, 25</div>
<div style="left:789px;top:343.8px;width:130px;height:17.5px;background:#fcd421;border-radius:2.500px;"></div>
<div style="top:347.12px;font-size:9.5px;line-height:12.35px;color:#222;font-weight:400;white-space:nowrap;left:754.3px;width:200px;text-align:center;">Approaching</div>
<div style="top:347.62px;font-size:9.2px;line-height:11.96px;color:#333;font-weight:400;white-space:nowrap;left:925.3px;-webkit-text-stroke:.15px #333;">17%</div>
<svg style="left:967.5px;top:337.0px;" width="8" height="5" viewBox="0 0 10 6"><path d="M1 1l4 4 4-4" fill="none" stroke="#222" stroke-width="1.600"/></svg>
<div style="top:379.78px;font-size:8.8px;line-height:11.44px;color:#222;font-weight:400;white-space:nowrap;left:723px;-webkit-text-stroke:.3px #222;letter-spacing:-.17px;">CCSS.Math.Content.2.MD.A</div>
<div style="left:723px;top:392.2px;width:262.4px;height:18.2px;box-sizing:border-box;border:1px solid #e0e0e0;border-radius:3px;background:#fafafa;"></div>
<div style="top:395.26px;font-size:9.45px;line-height:12.29px;color:#444;font-weight:400;white-space:nowrap;left:727px;-webkit-text-stroke:.12px #444;">No evidence has been aligned to this standard</div>
<div style="top:422.68px;font-size:8.8px;line-height:11.44px;color:#222;font-weight:400;white-space:nowrap;left:723px;-webkit-text-stroke:.3px #222;letter-spacing:-.17px;">CCSS.Math.Content.2.MD.C</div>
<div style="left:723px;top:435.3px;width:262.4px;height:18.2px;box-sizing:border-box;border:1px solid #e0e0e0;border-radius:3px;background:#fafafa;"></div>
<div style="top:438.46px;font-size:9.45px;line-height:12.29px;color:#444;font-weight:400;white-space:nowrap;left:727px;-webkit-text-stroke:.12px #444;">No evidence has been aligned to this standard</div>
<div style="top:465.48px;font-size:8.8px;line-height:11.44px;color:#222;font-weight:400;white-space:nowrap;left:723px;-webkit-text-stroke:.3px #222;letter-spacing:-.17px;">CCSS.Math.Content.2.MD.D</div>
<div style="left:723px;top:478.2px;width:262.4px;height:18.2px;box-sizing:border-box;border:1px solid #e0e0e0;border-radius:3px;background:#fafafa;"></div>
<div style="top:481.96px;font-size:9.45px;line-height:12.29px;color:#444;font-weight:400;white-space:nowrap;left:727px;-webkit-text-stroke:.12px #444;">No evidence has been aligned to this standard</div>
<div style="left:752px;top:197.5px;width:3.6px;height:12px;background:#fff;"></div>
<div style="left:752px;top:272.5px;width:3.2px;height:12.5px;background:#fff;"></div>
<div style="left:593px;top:132.2px;width:159px;height:178.8px;background:#fff;box-shadow:0 2px 7px rgba(0,0,0,.2);"></div>
<div style="left:605.8px;top:139.3px;width:24.2px;height:24px;background:#f449ee;border-radius:2.500px;"></div>
<div style="top:146.36px;font-size:9.45px;line-height:12.29px;color:#333;font-weight:400;white-space:nowrap;left:642.4px;"><span style="text-decoration:underline;text-underline-offset:1px;text-decoration-thickness:.6px;">N</span>eeds Support</div>
<div style="left:605.8px;top:176.15px;width:24.2px;height:24px;background:#f9820f;border-radius:2.500px;"></div>
<div style="top:183.21px;font-size:9.45px;line-height:12.29px;color:#333;font-weight:400;white-space:nowrap;left:642.4px;"><span style="text-decoration:underline;text-underline-offset:1px;text-decoration-thickness:.6px;">B</span>eginning</div>
<div style="left:605.8px;top:213.0px;width:24.2px;height:24px;background:#fcd421;border-radius:2.500px;"></div>
<div style="top:220.06px;font-size:9.45px;line-height:12.29px;color:#333;font-weight:400;white-space:nowrap;left:642.4px;"><span style="text-decoration:underline;text-underline-offset:1px;text-decoration-thickness:.6px;">A</span>pproaching</div>
<div style="left:593px;top:243.1px;width:151.8px;height:37.7px;box-sizing:border-box;border:1px solid #2f6fd8;border-radius:2px;background:#f1f1f1;"></div>
<div style="left:605.8px;top:249.85px;width:24.2px;height:24px;background:#b4c424;border-radius:2.500px;"></div>
<div style="top:256.91px;font-size:9.45px;line-height:12.29px;color:#333;font-weight:400;white-space:nowrap;left:642.4px;"><span style="text-decoration:underline;text-underline-offset:1px;text-decoration-thickness:.6px;">M</span>eeting</div>
<div style="left:605.8px;top:286.7px;width:24.2px;height:24px;background:#1f4fc0;border-radius:2.500px;"></div>
<div style="top:293.75px;font-size:9.45px;line-height:12.29px;color:#333;font-weight:400;white-space:nowrap;left:642.4px;"><span style="text-decoration:underline;text-underline-offset:1px;text-decoration-thickness:.6px;">A</span>head of Expectation</div>
<div style="left:745.4px;top:132.2px;width:6.6px;height:178.8px;background:#f3f3f3;"></div>
<div style="left:747px;top:134.5px;width:4.7px;height:139px;background:#c6c6c6;border-radius:2.500px;"></div>
<div style="left:592px;top:343.3px;width:111.6px;height:5px;background:#fbfbfb;"></div>
<div style="left:592px;top:310.8px;width:105px;height:32.9px;box-sizing:border-box;border:1.400px dashed #2dc294;border-right:none;background:#f1f1f1;"></div>
<svg style="left:599.8px;top:315.2px" width="24.2" height="24"><rect width="24.2" height="24" rx="2.500" fill="url(#hg)"/></svg>
<div style="top:316.62px;font-size:9.5px;line-height:12.35px;color:#2a2a2a;font-weight:400;white-space:nowrap;left:630.7px;">Meeting</div>
<div style="top:328.32px;font-size:7.5px;line-height:9.75px;color:#666;font-weight:400;white-space:nowrap;left:630.7px;">(Computed)</div>
<div style="left:699.6px;top:312px;width:4px;height:12px;background:#b5b5b5;"></div>
<div style="left:576.7px;top:300.4px;width:133.1px;height:53.7px;box-sizing:border-box;border:solid #f5230e;border-width:5.700px 6.100px 5.800px 6.400px;"></div>
</div></body></html>
